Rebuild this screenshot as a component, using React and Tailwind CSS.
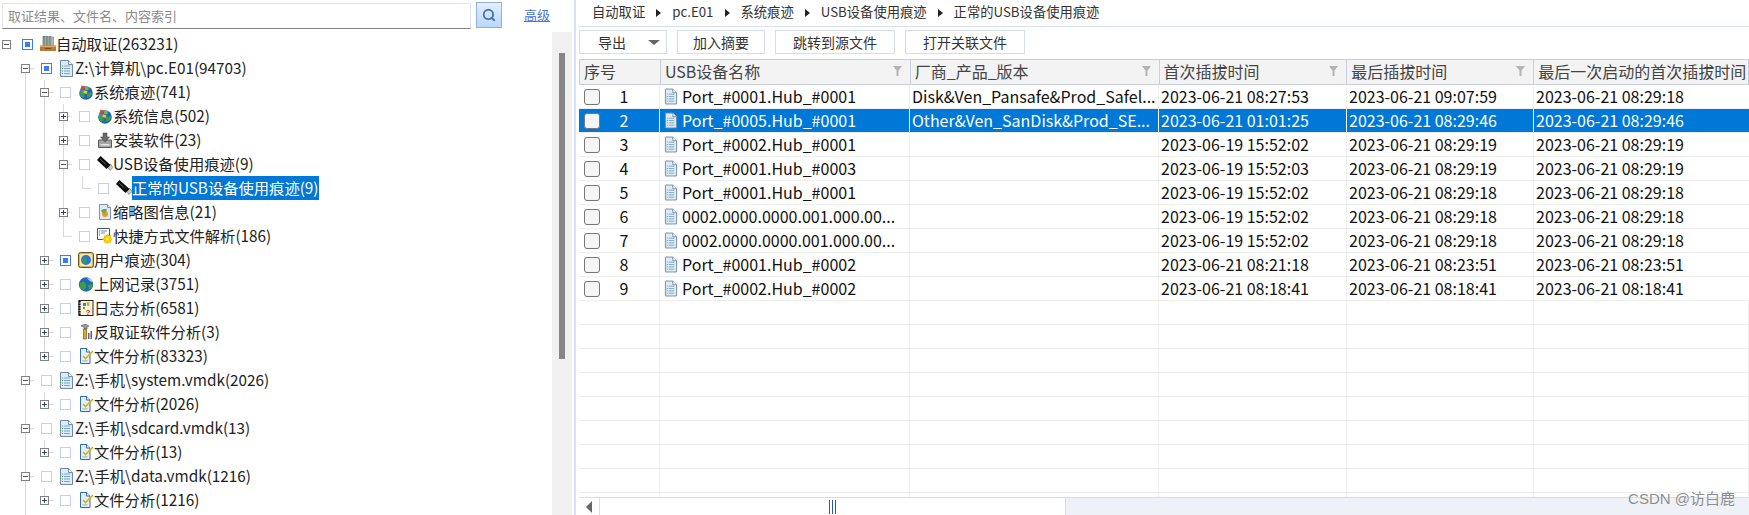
import React from 'react';
import { Search } from 'lucide-react';

const FONT = { fontFamily: '"Noto Sans CJK SC", "Noto Sans", sans-serif' };

// ---- tree icons, all drawn on a 16 box ----
const Svg = ({ children, w = 16, h = 16 }) => (
  <svg width={w} height={h} viewBox="0 0 16 16" className="shrink-0">
    {children}
  </svg>
);

const DocIcon = ({ w = 15, h = 17 }) => (
  <svg width={w} height={h} viewBox="0 0 15 17" className="shrink-0">
    <path d="M1.5 .5h8l4 4v12h-12z" fill="#dfeaf3" stroke="#6d8aa6" />
    <path d="M9.5 .5v4h4" fill="#fff" stroke="#6d8aa6" />
    <path d="M3 6h1M3 8.500h1M3 11h1M3 13.500h1" stroke="#4d9a5a" />
    <path d="M5 6h6M5 8.500h6M5 11h6M5 13.500h6" stroke="#7fa8cc" />
  </svg>
);

const ArchiveIcon = () => (
  <Svg>
    <path d="M3 0h2v10H3zM6 0h2v10H6zM9 0h2v10H9z" fill="#9fb3a6" stroke="#3f4f45" strokeWidth=".6" />
    <path d="M12 1h1.500v9H12z" fill="#c9d3c8" stroke="#5d6a60" strokeWidth=".5" />
    <path d="M0 9.500h16v5.500H0z" fill="#b9793a" />
    <path d="M0 9.500h16V11H0z" fill="#dca765" />
    <path d="M5 12h6v1H5z" fill="#7a4a1d" />
  </Svg>
);

const WinGlobe = () => (
  <Svg>
    <circle cx="8" cy="9" r="6.800" fill="#1f66b8" />
    <path d="M2 8c2-2 3-1 4 1s0 5-1 5-4-3-3-6zM9 10c1-2 5-2 5-.5s-3 4.500-5 4z" fill="#3f9e42" />
    <path d="M3.500 1.500l3.500 1-.8 3-3.500-1z" fill="#e5452f" />
    <path d="M7.500 2.500l3.500 1-.8 3-3.500-1z" fill="#6cc13c" />
    <path d="M2.500 5l3.300 1-.8 2.500-3-1z" fill="#3b8be0" />
    <path d="M6 6.200l3.500 1-.8 2.800-3.500-1z" fill="#f5c71a" />
  </Svg>
);

const InstallIcon = () => (
  <Svg>
    <path d="M1.500 8h13v7.500h-13z" fill="#a4a4a4" stroke="#5c5c5c" />
    <path d="M3.500 12h9v1.500h-9z" fill="#e4e4e4" />
    <path d="M6 1h4v4h2.500L8 10 3.500 5H6z" fill="#6b6b6b" stroke="#3f3f3f" strokeWidth=".5" />
  </Svg>
);

const UsbIcon = () => (
  <Svg>
    <path d="M10.500 11l3-3 2.500 3.500-3 3z" fill="#c9c9c9" stroke="#666" strokeWidth=".6" />
    <path d="M0 4l3.500-4L13.500 9 9.500 13z" fill="#0c0c0c" />
    <path d="M3 3l5.500 5" stroke="#777" strokeWidth=".8" />
  </Svg>
);

const ThumbIcon = () => (
  <Svg>
    <path d="M2.500 .5h8l3 3v12h-11z" fill="#dfeaf8" stroke="#7d93b5" />
    <path d="M10.500 .5v3h3" fill="#fff" stroke="#7d93b5" />
    <circle cx="8" cy="10" r="3" fill="#e89b23" />
    <path d="M4 7c1-2 4-2.500 6-1.500L9 8 6 9z" fill="#6aa845" />
  </Svg>
);

const ShortcutIcon = () => (
  <Svg>
    <path d="M.5 .5h12v11h-12z" fill="#fff" stroke="#4f5862" />
    <path d="M2 3h1M2 5h1M2 7h1" stroke="#3c8f4a" />
    <path d="M4 3h6M4 5h4" stroke="#5f8fc4" />
    <circle cx="10.500" cy="11" r="3.800" fill="#f7d414" stroke="#a37f08" strokeWidth=".5" />
    <path d="M10.500 6v10M5.500 11h10M7 7.500l7 7M14 7.500l-7 7" stroke="#f7d414" strokeWidth="1.600" />
    <circle cx="10.500" cy="11" r="1.100" fill="#fff6c8" />
  </Svg>
);

const UserIcon = () => (
  <Svg>
    <rect x=".5" y=".5" width="15" height="15" rx="2" fill="#d9b55c" stroke="#6e5416" />
    <rect x="2" y="2" width="12" height="12" rx="1" fill="#f3e6b8" />
    <circle cx="8" cy="8" r="5" fill="#2f79c8" />
    <path d="M4.500 6c2-1.500 3.500 0 3.500 2.500S7 12 6 12s-2.500-3.500-1.500-6z" fill="#3f9a4f" />
  </Svg>
);

const EarthIcon = () => (
  <Svg>
    <circle cx="8" cy="8.500" r="7.200" fill="#2469b8" />
    <path d="M2 7c2-2 5-1.500 6 1s-1 6-3 6-4-4-3-7zM10 9c2-1 5-1 5 0s-2 4.500-4 4.500z" fill="#3f9d45" />
    <path d="M9 2c3 .5 5.500 2 5.500 3.500S11 5 9 2z" fill="#a9d6f7" />
  </Svg>
);

const LogIcon = () => (
  <Svg>
    <rect x="1" y=".5" width="14" height="15" fill="#fbf4d8" stroke="#222" />
    <path d="M1.500 1v14" stroke="#111" strokeWidth="2.400" strokeDasharray="1.500 1" />
    <path d="M5 3h3v3H5z" fill="#4b76c8" />
    <path d="M9 2h2.500v4H9z" fill="#e0b020" />
    <path d="M5 7h2v2H5z" fill="#54a24b" />
    <text x="7.500" y="14.500" fontSize="8" fontWeight="700" fill="#c8281e" fontFamily="Liberation Sans, sans-serif">?</text>
  </Svg>
);

const ToolIcon = () => (
  <Svg>
    <path d="M3 2c2-2 6-2 8 0l-2 1v2H6V3z" fill="#9a9a9a" stroke="#444" strokeWidth=".5" />
    <path d="M5.500 5h3v10h-3z" fill="#e0a91e" stroke="#5a440a" strokeWidth=".6" />
    <path d="M10 9h1.500v6H10z" fill="#3b6fc4" />
    <path d="M12.500 7H14v8h-1.500z" fill="#c8382c" />
  </Svg>
);

const FileCheckIcon = () => (
  <Svg>
    <path d="M2.500 .5h6l3.500 3.500v11.500h-9.500z" fill="#e4effa" stroke="#2d6db5" />
    <path d="M8.500 .5v3.500h3.500" fill="#fff" stroke="#2d6db5" />
    <path d="M5 8l2.500 2.500L15 3" fill="none" stroke="#e3ad16" strokeWidth="1.600" />
    <path d="M4.500 13h5" stroke="#7fa8cc" />
  </Svg>
);

// ---- tree ----
const TREE = [
  { label: '自动取证(263231)', level: 0, Icon: ArchiveIcon, exp: 'minus', partial: true, noLine: true },
  { label: 'Z:\\计算机\\pc.E01(94703)', level: 1, Icon: DocIcon, exp: 'minus', partial: true, noTop: true },
  { label: '系统痕迹(741)', level: 2, Icon: WinGlobe, exp: 'minus', guides: [1] },
  { label: '系统信息(502)', level: 3, Icon: WinGlobe, exp: 'plus', guides: [1, 2] },
  { label: '安装软件(23)', level: 3, Icon: InstallIcon, exp: 'plus', guides: [1, 2] },
  { label: 'USB设备使用痕迹(9)', level: 3, Icon: UsbIcon, exp: 'minus', guides: [1, 2] },
  { label: '正常的USB设备使用痕迹(9)', level: 4, Icon: UsbIcon, end: true, guides: [1, 2, 3], selected: true },
  { label: '缩略图信息(21)', level: 3, Icon: ThumbIcon, exp: 'plus', guides: [1, 2] },
  { label: '快捷方式文件解析(186)', level: 3, Icon: ShortcutIcon, end: true, guides: [1, 2] },
  { label: '用户痕迹(304)', level: 2, Icon: UserIcon, exp: 'plus', partial: true, guides: [1] },
  { label: '上网记录(3751)', level: 2, Icon: EarthIcon, exp: 'plus', guides: [1] },
  { label: '日志分析(6581)', level: 2, Icon: LogIcon, exp: 'plus', guides: [1] },
  { label: '反取证软件分析(3)', level: 2, Icon: ToolIcon, exp: 'plus', guides: [1] },
  { label: '文件分析(83323)', level: 2, Icon: FileCheckIcon, exp: 'plus', end: true, guides: [1] },
  { label: 'Z:\\手机\\system.vmdk(2026)', level: 1, Icon: DocIcon, exp: 'minus' },
  { label: '文件分析(2026)', level: 2, Icon: FileCheckIcon, exp: 'plus', end: true, guides: [1] },
  { label: 'Z:\\手机\\sdcard.vmdk(13)', level: 1, Icon: DocIcon, exp: 'minus' },
  { label: '文件分析(13)', level: 2, Icon: FileCheckIcon, exp: 'plus', end: true, guides: [1] },
  { label: 'Z:\\手机\\data.vmdk(1216)', level: 1, Icon: DocIcon, exp: 'minus' },
  { label: '文件分析(1216)', level: 2, Icon: FileCheckIcon, exp: 'plus', end: true, guides: [1] },
];

const LINE = 'bg-[#d9d9d9]';

const Connector = ({ row }) => (
  <div className="relative flex h-full w-[19px] shrink-0 items-center">
    {!row.noLine && (
      <>
        {!row.noTop && <div className={`absolute left-[4px] top-0 h-1/2 w-px ${LINE}`} />}
        {!row.end && <div className={`absolute left-[4px] top-1/2 h-1/2 w-px ${LINE}`} />}
        <div className={`absolute left-[4px] top-1/2 h-px w-[9px] ${LINE}`} />
      </>
    )}
    {row.exp && (
      <div className="relative flex h-[9px] w-[9px] items-center justify-center border border-[#808080] bg-white">
        <div className={`h-px w-[5px] ${row.exp === 'plus' ? 'bg-[#2b3f78]' : 'bg-[#555]'}`} />
        {row.exp === 'plus' && <div className="absolute h-[5px] w-px bg-[#2b3f78]" />}
      </div>
    )}
  </div>
);

const TreeCheck = ({ partial }) => (
  <div className="flex w-[19px] shrink-0 pl-px">
    <div
      className={`flex h-[11px] w-[11px] items-center justify-center border ${
        partial ? 'border-[#3d7bf2]' : 'border-[#bcd2f7]'
      } bg-white`}
    >
      {partial && <div className="h-[5px] w-[5px] bg-[#3d7bf2]" />}
    </div>
  </div>
);

const TreeRow = ({ row }) => {
  const cols = [];
  for (let i = 0; i < row.level; i++) {
    cols.push(
      <div key={i} className="h-full w-[19px] shrink-0 pl-[4px]">
        {row.guides?.includes(i) && <div className={`h-full w-px ${LINE}`} />}
      </div>
    );
  }
  return (
    <div className="flex h-6 items-center pl-[2px] text-[15.3px] text-[#222]">
      {cols}
      <Connector row={row} />
      <TreeCheck partial={row.partial} />
      <div className="flex w-[17px] shrink-0 items-center">
        <row.Icon />
      </div>
      <span className={`-ml-px whitespace-nowrap pb-[2px] leading-[22px] ${row.selected ? 'bg-[#0078d7] text-white' : ''}`}>
        {row.label}
      </span>
    </div>
  );
};

// ---- table ----
const COLS = ['w-[81px]', 'w-[250px]', 'w-[249px]', 'w-[188px]', 'w-[187px]', 'w-[215px]'];

const HEAD = ['序号', 'USB设备名称', '厂商_产品_版本', '首次插拔时间', '最后插拔时间', '最后一次启动的首次插拔时间'];

const ROWS = [
  ['Port_#0001.Hub_#0001', 'Disk&Ven_Pansafe&Prod_Safel...', '2023-06-21 08:27:53', '2023-06-21 09:07:59', '2023-06-21 08:29:18'],
  ['Port_#0005.Hub_#0001', 'Other&Ven_SanDisk&Prod_SE...', '2023-06-21 01:01:25', '2023-06-21 08:29:46', '2023-06-21 08:29:46'],
  ['Port_#0002.Hub_#0001', '', '2023-06-19 15:52:02', '2023-06-21 08:29:19', '2023-06-21 08:29:19'],
  ['Port_#0001.Hub_#0003', '', '2023-06-19 15:52:03', '2023-06-21 08:29:19', '2023-06-21 08:29:19'],
  ['Port_#0001.Hub_#0001', '', '2023-06-19 15:52:02', '2023-06-21 08:29:18', '2023-06-21 08:29:18'],
  ['0002.0000.0000.001.000.00...', '', '2023-06-19 15:52:02', '2023-06-21 08:29:18', '2023-06-21 08:29:18'],
  ['0002.0000.0000.001.000.00...', '', '2023-06-19 15:52:02', '2023-06-21 08:29:18', '2023-06-21 08:29:18'],
  ['Port_#0001.Hub_#0002', '', '2023-06-21 08:21:18', '2023-06-21 08:23:51', '2023-06-21 08:23:51'],
  ['Port_#0002.Hub_#0002', '', '2023-06-21 08:18:41', '2023-06-21 08:18:41', '2023-06-21 08:18:41'],
];

const Funnel = () => (
  <svg width="9" height="10" viewBox="0 0 9 10" className="absolute right-[8px] top-[6px]">
    <path d="M0 0h9L5.500 4.500V10h-2V4.500z" fill="#b4b4b4" />
  </svg>
);

const HeaderRow = () => (
  <div className="flex h-[26px] shrink-0 border-y border-l border-[#c9cfdd] bg-[#f3f3f3] text-[16px] text-[#444]">
    {HEAD.map((h, i) => (
      <div key={h} className={`relative flex items-center whitespace-nowrap border-r border-[#c9cfdd] pl-[4px] ${COLS[i]}`}>
        <span className="mb-[2px]">{h}</span>
        {i > 0 && i < 5 && <Funnel />}
      </div>
    ))}
  </div>
);

const DataRow = ({ row, no }) => {
  const sel = no === 2;
  const sep = sel ? 'border-white' : 'border-[#eeeeee]';
  return (
    <div className={`flex h-6 shrink-0 border-b border-[#eeeeee] text-[16px] ${sel ? 'bg-[#0078d7] text-white' : 'text-[#111]'}`}>
      <div className={`flex items-center border-r pl-[5px] ${sep} ${COLS[0]}`}>
        <div className="h-4 w-4 rounded-[3px] border border-[#777] bg-[#f5f5f5]" />
        <span className="mb-[2px] w-[48px] text-center">{no}</span>
      </div>
      <div className={`flex items-center gap-[4px] whitespace-nowrap border-r pl-[4px] ${sep} ${COLS[1]}`}>
        <DocIcon w={14} h={17} />
        <span className="mb-[2px]">{row[0]}</span>
      </div>
      {row.slice(1).map((v, i) => (
        <div key={i} className={`flex items-center whitespace-nowrap pl-[2px] ${i < 3 ? 'border-r' : ''} ${sep} ${COLS[i + 2]}`}>
          <span className="mb-[2px]">{v}</span>
        </div>
      ))}
    </div>
  );
};

const EmptyRow = () => (
  <div className="flex h-6 shrink-0 border-b border-[#eeeeee]">
    {COLS.map((c, i) => (
      <div key={i} className={`border-r border-[#eeeeee] ${c}`} />
    ))}
  </div>
);

const CRUMBS = ['自动取证', 'pc.E01', '系统痕迹', 'USB设备使用痕迹', '正常的USB设备使用痕迹'];

const Breadcrumb = () => (
  <div className="ml-[2px] flex h-[27px] shrink-0 items-center gap-[11px] border-b border-[#d9e3f0] pl-[14px] text-[13.3px] text-[#333]">
    {CRUMBS.map((c, i) => (
      <React.Fragment key={c}>
        {i > 0 && <div className="h-0 w-0 border-y-[4px] border-l-[5px] border-y-transparent border-l-[#222]" />}
        <span className="mb-[2px]">{c}</span>
      </React.Fragment>
    ))}
  </div>
);

const ToolButton = ({ children, className }) => (
  <button className={`flex h-[24px] items-center justify-center border border-[#d6deea] bg-white text-[14px] text-[#333] ${className}`}>
    {children}
  </button>
);

export default function App() {
  return (
    <div className="relative flex h-[515px] w-[1749px] overflow-hidden bg-white" style={FONT}>
      {/* left: search + evidence tree */}
      <div className="flex w-[574px] shrink-0 flex-col">
        <div className="flex h-[32px] shrink-0 items-start pl-[2px] pt-[2px]">
          <div className="mt-px flex h-[26px] w-[469px] items-center border border-[#e6e6e6] border-b-[#808080] pl-[5px] text-[13px] text-[#8a8a8a]">
            取证结果、文件名、内容索引
          </div>
          <button className="ml-[5px] flex h-[26px] w-[26px] items-center justify-center border border-[#8fb0dc] bg-gradient-to-b from-[#e3f0ff] to-[#b9d7fb]">
            <Search size={14} strokeWidth={3.2} className="text-[#4a76ae]" />
          </button>
          <span className="ml-[22px] mt-[4px] text-[13px] leading-[17px] text-[#4a78d8] underline">高级</span>
        </div>
        <div className="flex min-h-0 flex-1">
          <div className="min-w-0 flex-1 overflow-hidden">
            {TREE.map((r, i) => (
              <TreeRow key={i} row={r} />
            ))}
            <div className="h-6 w-[40px] pl-[25px]">
              <div className={`h-full w-px ${LINE}`} />
            </div>
          </div>
          <div className="mr-[2px] w-[20px] shrink-0 bg-[#f0f0f0] px-[7px] pt-[21px]">
            <div className="h-[306px] w-[6px] bg-[#868686]" />
          </div>
        </div>
      </div>

      <div className="w-[2px] shrink-0 bg-[#d6e2f4]" />

      {/* right: breadcrumb, toolbar, grid */}
      <div className="flex min-w-0 flex-1 flex-col">
        <Breadcrumb />
        <div className="ml-[3px] mb-[5px] mt-[3px] flex shrink-0 gap-[10px]">
          <ToolButton className="w-[88px] !justify-start gap-[22px] pl-[18px]">
            <span>导出</span>
            <div className="h-0 w-0 border-x-[6px] border-t-[5px] border-x-transparent border-t-[#666]" />
          </ToolButton>
          <ToolButton className="w-[88px]">加入摘要</ToolButton>
          <ToolButton className="w-[120px]">跳转到源文件</ToolButton>
          <ToolButton className="w-[120px]">打开关联文件</ToolButton>
        </div>
        <div className="ml-[3px] flex min-h-0 flex-1 flex-col overflow-hidden">
          <HeaderRow />
          {ROWS.map((r, i) => (
            <DataRow key={i} row={r} no={i + 1} />
          ))}
          {Array.from({ length: 9 }).map((_, i) => (
            <EmptyRow key={i} />
          ))}
        </div>
        <div className="ml-[3px] flex h-[18px] shrink-0 border-t border-[#d5dcea] bg-[#eef1f7]">
          <div className="flex w-[21px] items-center justify-center border-r border-[#d5dcea] bg-white">
            <div className="h-0 w-0 border-y-[6px] border-r-[6px] border-y-transparent border-r-[#666]" />
          </div>
          <div className="flex w-[466px] items-center justify-center gap-[2px] border-r border-[#d5dcea] bg-white">
            <div className="h-[14px] w-px bg-[#1f5fae]" />
            <div className="h-[14px] w-px bg-[#1f5fae]" />
            <div className="h-[14px] w-px bg-[#1f5fae]" />
          </div>
        </div>
      </div>

      {/* csdn watermark */}
      <div
        className="absolute right-[14px] top-[490px] text-[15px] leading-[18px] text-[#8c8c8c]"
        style={{ fontFamily: '"Liberation Sans", "Noto Sans CJK SC", sans-serif', textShadow: '0 0 1px #fff' }}
      >
        CSDN @访白鹿
      </div>
    </div>
  );
}
